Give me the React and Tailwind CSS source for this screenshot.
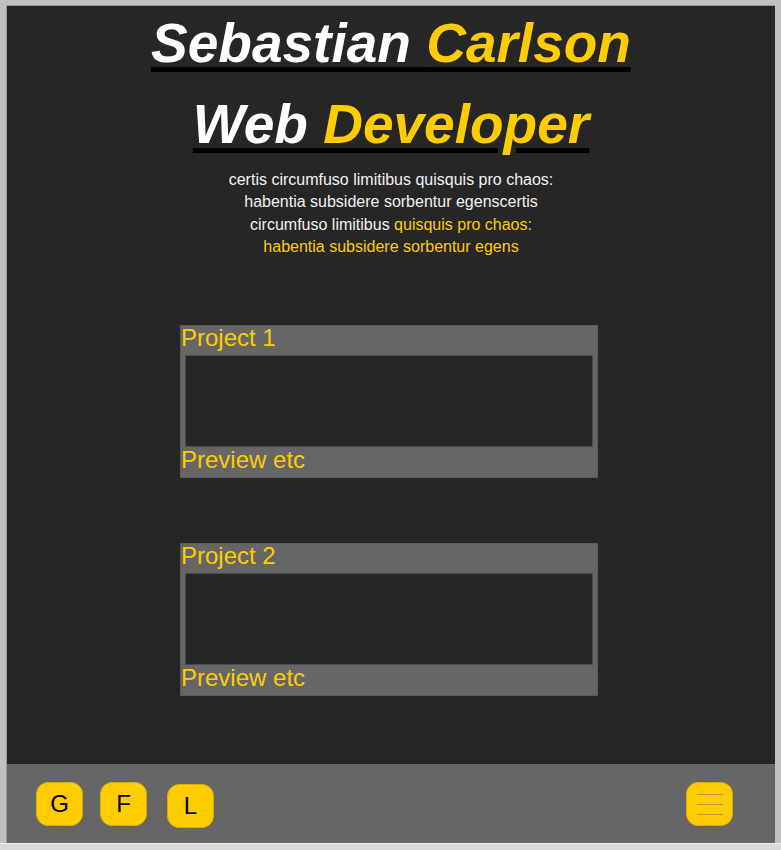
const Project = ({ title }) => (
  <div className="w-[418px] ml-[173px] border border-[#5a5a5a] bg-[#666666] pb-[5px] text-[24px] leading-[24px] text-[#ffcc00]">
    <div className="mb-[5px]">{title}</div>
    <div className="ml-[4px] w-[408px] h-[92px] border border-[#4a4a4a] bg-[#262626]"></div>
    <div className="pt-[1px]">Preview etc</div>
  </div>
);

const FooterButton = ({ children, extra = '' }) => (
  <button
    className={`w-[47px] h-[44px] rounded-[12px] border border-[#d9ad00] bg-[#ffcc00] text-[24px] leading-none text-black flex items-center justify-center ${extra}`}
  >
    {children}
  </button>
);

export default function App() {
  return (
    <div
      className="w-[781px] h-[850px] bg-[#c0c0c0] pt-[5px] flex flex-col"
      style={{ fontFamily: '"Liberation Sans", Arial, sans-serif' }}
    >
      <div className="mx-[6px] flex-1 flex flex-col border-l border-t border-[#9a9a9a]">
        {/* main */}
        <div className="flex-1 bg-[#262626] pt-[5px]">
          <h1 className="text-center text-[55px] leading-[64px] font-bold italic">
            <span className="text-white underline decoration-black decoration-[5px] underline-offset-[5px]">Sebastian </span>
            <span className="text-[#ffcc00] underline decoration-black decoration-[5px] underline-offset-[5px]">Carlson</span>
          </h1>
          <h1 className="mt-[17px] text-center text-[55px] leading-[64px] font-bold italic">
            <span className="text-white underline decoration-black decoration-[5px] underline-offset-[5px]">Web </span>
            <span className="text-[#ffcc00] underline decoration-black decoration-[5px] underline-offset-[5px]">Developer</span>
          </h1>
          <p className="mx-auto mt-[13px] w-[336px] text-center text-[16px] leading-[22.4px] text-[#f2f2f2]">
            certis circumfuso limitibus quisquis pro chaos: habentia subsidere sorbentur egenscertis circumfuso limitibus{' '}
            <span className="text-[#ffcc00]">quisquis pro chaos: habentia subsidere sorbentur egens</span>
          </p>

          <div className="mt-[66px] flex flex-col gap-[65px]">
            <Project title="Project 1" />
            <Project title="Project 2" />
          </div>
        </div>

        {/* footer */}
        <div className="h-[79px] bg-[#666666] flex items-start justify-between pt-[18px] pl-[29px] pr-[42px]">
          <div className="flex">
            <FooterButton>G</FooterButton>
            <FooterButton extra="ml-[17px]">F</FooterButton>
            <FooterButton extra="ml-[20px] mt-[2px]">L</FooterButton>
          </div>
          <button className="w-[47px] h-[44px] rounded-[12px] border border-[#d9ad00] bg-[#ffcc00] flex flex-col items-center justify-center gap-[9px]">
            <span className="block w-[26px] h-px bg-[#b8952c]"></span>
            <span className="block w-[26px] h-px bg-[#b8952c]"></span>
            <span className="block w-[26px] h-px bg-[#b8952c]"></span>
          </button>
        </div>
      </div>
      <div className="h-[7px] bg-[#dadada] border-t border-[#f0f0f0]"></div>
    </div>
  );
}
